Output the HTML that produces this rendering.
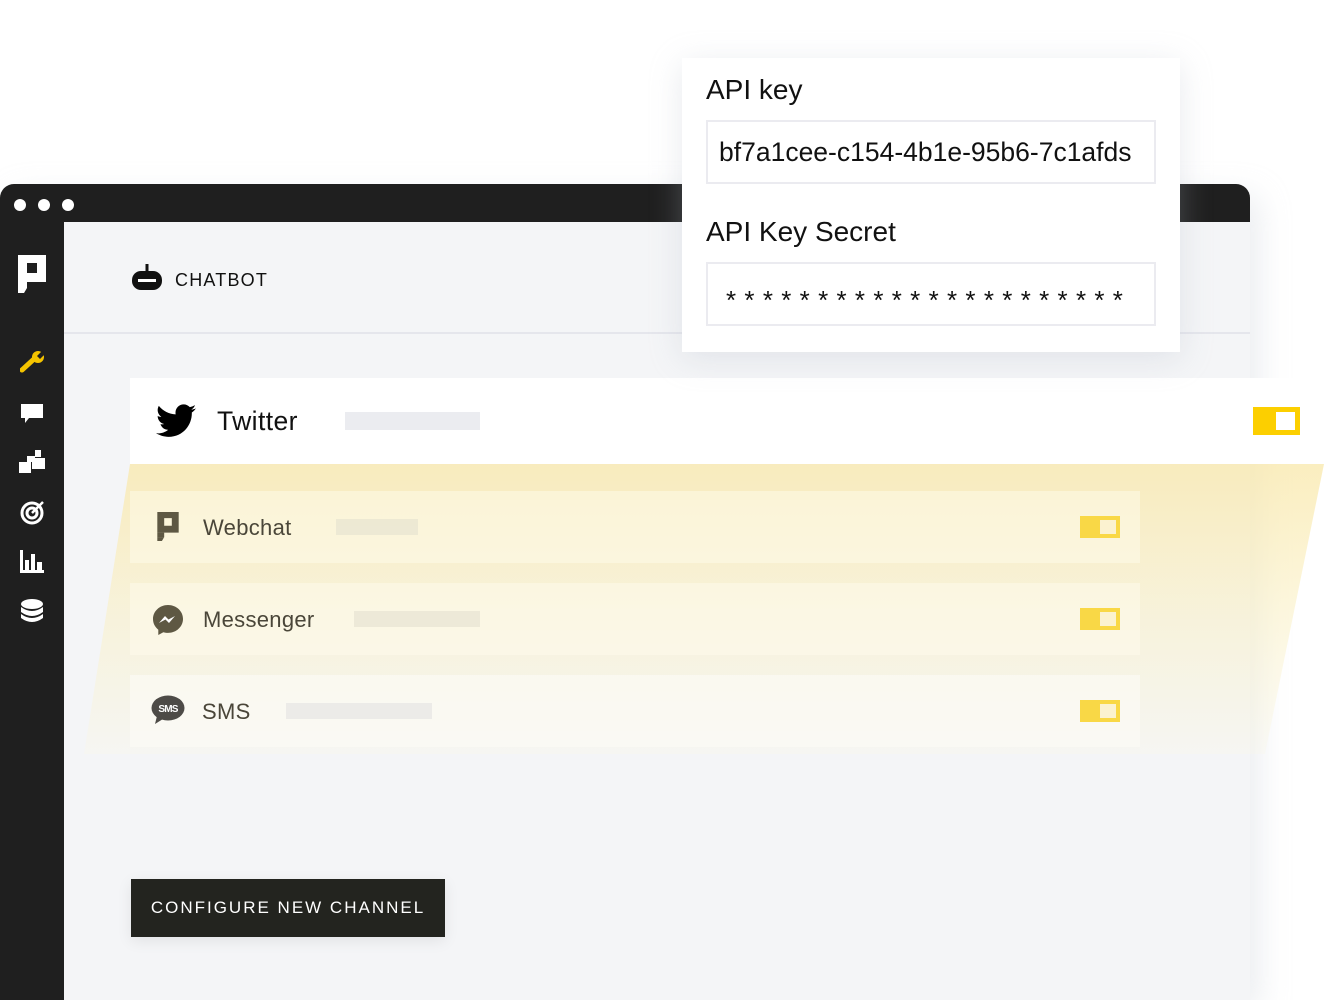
<!DOCTYPE html>
<html><head><meta charset="utf-8"><style>
*{margin:0;padding:0;box-sizing:border-box}
body{width:1324px;height:1000px;background:#fff;position:relative;overflow:hidden;font-family:"Liberation Sans",sans-serif;color:#111}
.abs{position:absolute}
.win{left:0;top:184px;width:1250px;height:816px;background:#f4f5f7;border-radius:14px 14px 0 0;overflow:hidden;box-shadow:10px 10px 30px rgba(200,205,215,.35)}
.bar{left:0;top:0;width:1250px;height:38px;background:#1f1f1f}
.dot{width:12px;height:12px;border-radius:50%;background:#fff;top:15px}
.side{left:0;top:38px;width:64px;height:800px;background:#1f1f1f}
.tog{width:40px;height:22px;background:#f9d846;}
.tog i{position:absolute;right:4px;top:4px;width:16px;height:14px;background:#fbf2d0}
.row{left:130px;width:1010px;height:72px;background:rgba(255,252,240,.45)}
.lbl{font-size:22px;color:#4a4639;letter-spacing:.3px}
.ph{height:16px;background:rgba(225,222,205,.55)}
</style></head><body>
<div class="abs win">
 <div class="abs bar"></div>
 <div class="abs dot" style="left:14px"></div><div class="abs dot" style="left:38px"></div><div class="abs dot" style="left:62px"></div>
 <div class="abs side">
  <svg class="abs" style="left:18px;top:33px" width="28" height="38" viewBox="0 0 28 38"><path d="M0 0H28V27H0ZM9 8V18H19V8Z" fill="#fff" fill-rule="evenodd"/><rect x="0" y="27" width="9" height="6" fill="#fff"/><path d="M0 33H9L6 38H0Z" fill="#fff"/></svg>
  <svg class="abs" style="left:20px;top:128px" width="26" height="24" viewBox="0 0 26 24"><path d="M2 20L14 9" stroke="#f5c400" stroke-width="5" stroke-linecap="round"/><circle cx="18" cy="7" r="6" fill="#f5c400"/><path d="M17 6L22 1L25 4L20 9Z" fill="#1f1f1f"/></svg>
  <svg class="abs" style="left:21px;top:182px" width="22" height="20"><path d="M0 0H22V14H8L4 19V14H0Z" fill="#fff"/></svg>
  <svg class="abs" style="left:19px;top:228px" width="26" height="24"><rect x="0" y="12" width="12" height="11" fill="#fff"/><rect x="13" y="8" width="13" height="11" fill="#fff"/><rect x="8" y="6" width="8" height="6" fill="#fff"/><rect x="16" y="0" width="6" height="7" fill="#fff"/></svg>
  <svg class="abs" style="left:20px;top:277px" width="26" height="26"><circle cx="12" cy="14" r="10" fill="none" stroke="#fff" stroke-width="3"/><circle cx="12" cy="14" r="5" fill="none" stroke="#fff" stroke-width="3"/><path d="M12 14L23 3" stroke="#fff" stroke-width="2.5"/></svg>
  <svg class="abs" style="left:20px;top:328px" width="24" height="24"><rect x="0" y="0" width="3" height="22" fill="#fff"/><rect x="5" y="10" width="4" height="12" fill="#fff"/><rect x="11" y="4" width="4" height="18" fill="#fff"/><rect x="17" y="12" width="5" height="10" fill="#fff"/><rect x="0" y="20" width="24" height="3" fill="#fff"/></svg>
  <svg class="abs" style="left:20px;top:377px" width="24" height="26"><ellipse cx="12" cy="5" rx="11" ry="5" fill="#fff"/><path d="M1 8Q12 16 23 8V13Q12 21 1 13Z" fill="#fff"/><path d="M1 15Q12 23 23 15V19Q12 27 1 19Z" fill="#fff"/></svg>
 </div>
 <svg class="abs" style="left:131px;top:80px" width="32" height="28"><rect x="14.5" y="0" width="3" height="8" fill="#111"/><rect x="1" y="7" width="30" height="19" rx="9" fill="#111"/><rect x="7" y="15" width="18" height="3" fill="#fff"/></svg>
 <div class="abs" style="left:175px;top:86px;font-size:18px;letter-spacing:1.2px;color:#111">CHATBOT</div>
 <div class="abs" style="left:64px;top:148px;width:1186px;height:2px;background:#e5e6ec"></div>
</div>
<div class="abs" style="left:0;top:464px;width:1324px;height:300px;clip-path:polygon(130px 0,1324px 0,1265px 290px,84px 290px);background:linear-gradient(180deg,rgba(249,232,170,.75) 0%,rgba(250,240,195,.55) 50%,rgba(250,248,235,.25) 100%)"></div>
<div class="abs" style="left:130px;top:378px;width:1170px;height:86px;background:#fff"></div>
<svg class="abs" style="left:156px;top:404px" width="40" height="34" viewBox="0 0 24 20"><path d="M24 2.4c-.9.4-1.8.6-2.8.8 1-.6 1.800-1.6 2.2-2.7-1 .6-2 1-3.1 1.2C19.3.6 18 0 16.6 0c-2.7 0-4.9 2.2-4.9 4.9 0 .4 0 .8.1 1.1C7.7 5.8 4.1 3.9 1.7.9c-.4.7-.7 1.6-.7 2.5 0 1.7.9 3.2 2.2 4.1-.8 0-1.6-.2-2.200-.6v.1c0 2.4 1.7 4.4 3.9 4.8-.4.1-.8.2-1.3.2-.3 0-.6 0-.9-.1.6 2 2.4 3.4 4.6 3.4-1.7 1.3-3.8 2.100-6.1 2.1-.4 0-.8 0-1.2-.1 2.2 1.4 4.8 2.2 7.5 2.2 9.1 0 14-7.5 14-14v-.6c1-.7 1.8-1.6 2.5-2.5z" fill="#000"/></svg>
<div class="abs" style="left:217px;top:406px;font-size:26.5px;color:#111;letter-spacing:.4px">Twitter</div>
<div class="abs" style="left:345px;top:412px;width:135px;height:18px;background:#ebecf0"></div>
<div class="abs" style="left:1253px;top:407px;width:47px;height:28px;background:#fccf00"><i class="abs" style="right:5px;top:5px;width:19px;height:18px;background:#fff"></i></div>
<div class="abs row" style="top:491px"></div>
<svg class="abs" style="left:157px;top:512px" width="22" height="29" viewBox="0 0 28 38"><path d="M0 0H28V27H0ZM9 8V18H19V8Z" fill="#5e5843" fill-rule="evenodd"/><rect x="0" y="27" width="9" height="6" fill="#5e5843"/><path d="M0 33H9L6 38H0Z" fill="#5e5843"/></svg>
<div class="abs lbl" style="left:203px;top:515px">Webchat</div>
<div class="abs ph" style="left:336px;top:519px;width:82px"></div>
<div class="abs tog" style="left:1080px;top:516px"><i></i></div>
<div class="abs row" style="top:583px"></div>
<svg class="abs" style="left:152px;top:604px" width="32" height="31" viewBox="0 0 32 31"><path d="M16 1C7.7 1 1 7.2 1 15c0 4.3 2 8.1 5.3 10.7V31l5-2.8c1.5.4 3.1.7 4.7.7 8.3 0 15-6.2 15-14S24.3 1 16 1z" fill="#5e5843"/><path d="M7 19l6-7 3.5 3.5L23 12l-6 7-3.5-3.5z" fill="#fff"/></svg>
<div class="abs lbl" style="left:203px;top:607px">Messenger</div>
<div class="abs ph" style="left:354px;top:611px;width:126px"></div>
<div class="abs tog" style="left:1080px;top:608px"><i></i></div>
<div class="abs row" style="top:675px;background:rgba(253,252,246,.6)"></div>
<svg class="abs" style="left:151px;top:695px" width="34" height="30" viewBox="0 0 34 30"><ellipse cx="17" cy="13" rx="16.5" ry="12.5" fill="#4d4b47"/><path d="M6 21L4 29L12 24Z" fill="#4d4b47"/><text x="17" y="17" font-size="10" font-family="Liberation Sans" font-weight="bold" fill="#fff" text-anchor="middle" letter-spacing="-.8">SMS</text></svg>
<div class="abs lbl" style="left:202px;top:699px">SMS</div>
<div class="abs ph" style="left:286px;top:703px;width:146px;background:#ecebe8"></div>
<div class="abs tog" style="left:1080px;top:700px"><i></i></div>
<div class="abs" style="left:131px;top:879px;width:314px;height:58px;background:#23241f;color:#fff;font-size:17px;letter-spacing:2px;line-height:58px;text-align:center;box-shadow:0 4px 14px rgba(0,0,0,.08)">CONFIGURE NEW CHANNEL</div>
<div class="abs" style="left:682px;top:58px;width:498px;height:294px;background:#fff;box-shadow:0 6px 30px rgba(180,185,200,.3)"></div>
<div class="abs" style="left:706px;top:74px;font-size:28px;color:#111">API key</div>
<div class="abs" style="left:706px;top:120px;width:450px;height:64px;border:2px solid #ebebf0;font-size:26.5px;line-height:60px;padding-left:11px;color:#111;white-space:nowrap">bf7a1cee-c154-4b1e-95b6-7c1afds</div>
<div class="abs" style="left:706px;top:216px;font-size:28px;color:#111">API Key Secret</div>
<div class="abs" style="left:706px;top:262px;width:450px;height:64px;border:2px solid #ebebf0;font-size:26px;line-height:72px;padding-left:18px;letter-spacing:8.3px;color:#111;white-space:nowrap;overflow:hidden">**********************</div>
</body></html>
